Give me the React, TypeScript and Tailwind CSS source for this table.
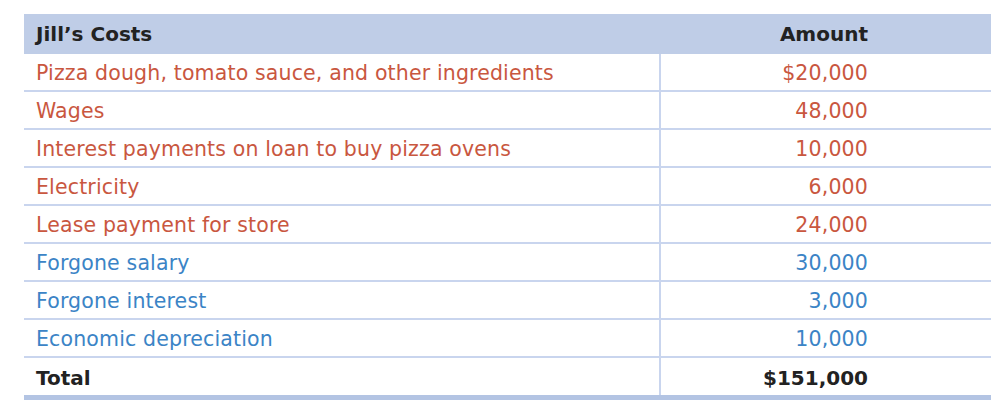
const rows: { label: string; amount: string; color: string }[] = [
  { label: "Pizza dough, tomato sauce, and other ingredients", amount: "$20,000", color: "text-[#c9573f]" },
  { label: "Wages", amount: "48,000", color: "text-[#c9573f]" },
  { label: "Interest payments on loan to buy pizza ovens", amount: "10,000", color: "text-[#c9573f]" },
  { label: "Electricity", amount: "6,000", color: "text-[#c9573f]" },
  { label: "Lease payment for store", amount: "24,000", color: "text-[#c9573f]" },
  { label: "Forgone salary", amount: "30,000", color: "text-[#3b84c6]" },
  { label: "Forgone interest", amount: "3,000", color: "text-[#3b84c6]" },
  { label: "Economic depreciation", amount: "10,000", color: "text-[#3b84c6]" },
];

export default function App() {
  return (
    <div className="w-[1006px] h-[408px] bg-white pt-[14px] pl-[24px] font-['DejaVu_Sans',sans-serif]">
      <div className="w-[967px]">
        <div className="h-[40px] bg-[#bfcde7] grid grid-cols-[635px_332px] items-center text-[#222] font-bold text-[20px]">
          <div className="pl-[12px]">Jill’s Costs</div>
          <div className="text-right pr-[123px]">Amount</div>
        </div>
        {rows.map((r) => (
          <div
            key={r.label}
            className={`h-[38px] grid grid-cols-[635px_2px_330px] border-b-2 border-[#c9d5ee] text-[20.5px] tracking-[0.15px] ${r.color}`}
          >
            <div className="pl-[12px] flex items-center pt-[2px]">{r.label}</div>
            <div className="bg-[#c9d5ee]" />
            <div className="flex items-center justify-end pr-[123px] pt-[2px]">{r.amount}</div>
          </div>
        ))}
        <div className="h-[37px] grid grid-cols-[635px_2px_330px] text-[#222] font-bold text-[20px]">
          <div className="pl-[12px] flex items-center pt-[2px]">Total</div>
          <div className="bg-[#c9d5ee]" />
          <div className="flex items-center justify-end pr-[123px] pt-[2px]">$151,000</div>
        </div>
        <div className="h-[5px] bg-[#b3c4e3]" />
      </div>
    </div>
  );
}
